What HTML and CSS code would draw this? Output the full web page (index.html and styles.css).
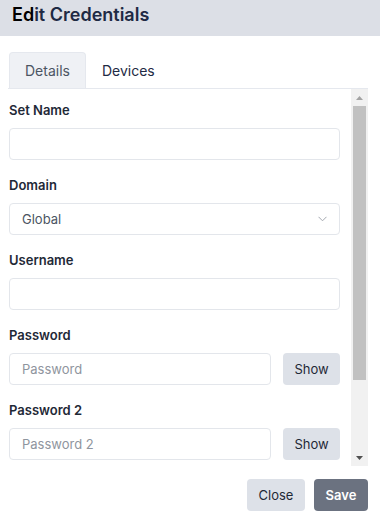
FILE: index.html
```html
<!DOCTYPE html>
<html>
  <head>
    <meta charset="UTF-8" />
    <meta name="viewport" content="width=device-width, initial-scale=1.0" />
    <title>Edit Credentials</title>
    <link rel="stylesheet" href="styles.css">
  </head>
  <body>
    <div class="modal">
      <div class="modal-header">
        <h1 class="title"><span class="title-start">Ed</span>it Credentials</h1>
      </div>
      <div class="modal-body">
        <div class="tabs">
          <div class="tab active">Details</div>
          <div class="tab">Devices</div>
        </div>
        <div class="pane">
          <div class="tab-content">
            <div class="field">
              <label class="label">Set Name</label>
              <input class="input" type="text" />
            </div>
            <div class="field">
              <label class="label">Domain</label>
              <div class="select">
                <span>Global</span>
                <svg width="9" height="6" viewBox="0 0 9 6">
                  <path d="M0.5 0.8 L4.5 4.8 L8.5 0.8" fill="none" stroke="#a3a8b0" stroke-width="1" />
                </svg>
              </div>
            </div>
            <div class="field">
              <label class="label">Username</label>
              <input class="input" type="text" />
            </div>
            <div class="field">
              <label class="label">Password</label>
              <div class="row">
                <input class="input" type="password" placeholder="Password" />
                <button class="btn">Show</button>
              </div>
            </div>
            <div class="field">
              <label class="label">Password 2</label>
              <div class="row">
                <input class="input" type="password" placeholder="Password 2" />
                <button class="btn">Show</button>
              </div>
            </div>
          </div>
          <!-- scrollbar drawn by hand, the browser hides real ones -->
          <div class="scrollbar">
            <div class="scroll-btn">
              <svg width="7" height="4" viewBox="0 0 7 4"><path d="M0 4 L3.5 0 L7 4 Z" fill="#a3a3a3" /></svg>
            </div>
            <div class="scroll-thumb"></div>
            <div class="scroll-track"></div>
            <div class="scroll-btn">
              <svg width="7" height="4" viewBox="0 0 7 4"><path d="M0 0 L7 0 L3.5 4 Z" fill="#505050" /></svg>
            </div>
          </div>
        </div>
      </div>
      <div class="modal-footer">
        <button class="btn close">Close</button>
        <button class="btn primary">Save</button>
      </div>
    </div>
  </body>
</html>
```

FILE: styles.css
```css
body {
  margin: 0;
  font-family: Inter, 'Noto Sans', sans-serif;
  color: #1f2937;
  background: #fff;
}
.modal-header {
  height: 36px;
  padding: 0 12px;
  background: #dcdfe6;
  box-sizing: border-box;
}
.title {
  margin: 0;
  font-size: 18px;
  font-weight: 600;
  line-height: 30px;
  color: #1e2a44;
}
.title-start {
  color: #000;
}
.modal-body {
  padding: 16px 12px 0 8px;
}
.tabs {
  display: flex;
  border-bottom: 1px solid #e5e8ee;
}
.tab {
  height: 36px;
  line-height: 36px;
  padding: 0 15px;
  font-size: 14px;
  color: #1e2a44;
  border: 1px solid transparent;
  border-bottom: none;
  border-radius: 4px 4px 0 0;
  box-sizing: border-box;
}
.tab.active {
  margin-left: 1px;
  background: #eff1f5;
  border-color: #e5e8ee;
  color: #4b5563;
}
.pane {
  display: flex;
  height: 377px;
}
.tab-content {
  flex: 1;
  overflow: hidden;
  padding: 12px 11px 0 1px;
}
.scrollbar {
  width: 17px;
  display: flex;
  flex-direction: column;
  background: #f1f1f1;
}
.scroll-btn {
  height: 17px;
  display: flex;
  align-items: center;
  justify-content: center;
}
.scroll-thumb {
  height: 274px;
  margin: 0 2px;
  background: #c1c1c1;
}
.scroll-track {
  flex: 1;
}
.field {
  margin-bottom: 16px;
}
.label {
  display: block;
  font-size: 13px;
  font-weight: 600;
  line-height: 18px;
  margin-bottom: 9px;
  color: #1f2937;
}
.input,
.select {
  width: 100%;
  height: 32px;
  padding: 0 12px;
  border: 1px solid #e3e6eb;
  border-radius: 4px;
  font-family: inherit;
  font-size: 13px;
  color: #4b5563;
  background: #fff;
  box-sizing: border-box;
  outline: none;
}
.input::placeholder {
  color: #8f959e;
}
.select {
  display: flex;
  align-items: center;
  justify-content: space-between;
}
.row {
  display: flex;
  gap: 12px;
}
.row .input {
  flex: 1;
}
.btn {
  height: 32px;
  padding: 0 12px;
  border: none;
  border-radius: 4px;
  background: #dde1e8;
  font-family: inherit;
  font-size: 13px;
  color: #1f2937;
  cursor: pointer;
}
.row .btn {
  width: 57px;
  padding: 0;
}
.modal-footer {
  display: flex;
  justify-content: flex-end;
  gap: 9px;
  margin-top: 13px;
  padding: 0 12px 0 8px;
}
.modal-footer .btn {
  padding: 0;
}
.btn.close {
  width: 58px;
}
.btn.primary {
  width: 54px;
  background: #6b7280;
  color: #fff;
  font-weight: 600;
}
```
